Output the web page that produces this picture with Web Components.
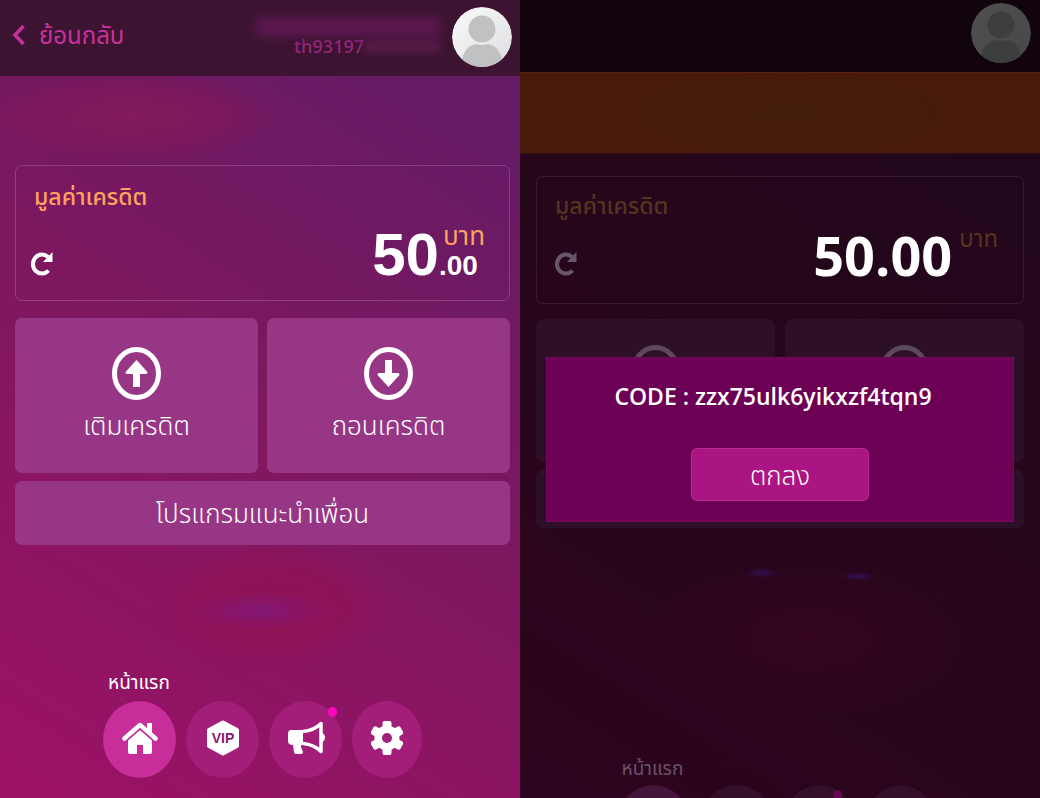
<!DOCTYPE html>
<html lang="th">
<head>
<meta charset="utf-8">
<meta name="viewport" content="width=device-width, initial-scale=1">
<title>เครดิต</title>
<style>
  body { margin: 0; font-family: "Open Sans", "Noto Sans Thai", "Noto Sans", sans-serif; background: #24061b; }
  main { display: grid; grid-template-columns: 1fr 1fr; height: 100vh; overflow: hidden; }
</style>
</head>
<body>
<main>
  <wallet-screen>
    <app-header slot="header">
      <a slot="back" href="#back">ย้อนกลับ</a>
      <span slot="user">th93197</span>
    </app-header>
    <credit-card>
      <span slot="title">มูลค่าเครดิต</span>
      <span slot="amount">50</span>
      <span slot="cents">.00</span>
      <span slot="unit">บาท</span>
    </credit-card>
    <action-tile direction="up">เติมเครดิต</action-tile>
    <action-tile direction="down">ถอนเครดิต</action-tile>
    <action-tile wide>โปรแกรมแนะนำเพื่อน</action-tile>
    <tab-bar slot="tabs">หน้าแรก</tab-bar>
  </wallet-screen>
  <wallet-screen dim>
    <app-header slot="header" dim></app-header>
    <credit-card dim>
      <span slot="title">มูลค่าเครดิต</span>
      <span slot="amount">50.00</span>
      <span slot="unit">บาท</span>
    </credit-card>
    <action-tile direction="up" dim></action-tile>
    <action-tile direction="down" dim></action-tile>
    <action-tile wide dim></action-tile>
    <tab-bar slot="tabs" dim>หน้าแรก</tab-bar>
    <code-dialog slot="dialog">CODE : zzx75ulk6yikxzf4tqn9<span slot="confirm">ตกลง</span></code-dialog>
  </wallet-screen>
</main>
<script>
const define = (name, markup, setup) => customElements.define(name, class extends HTMLElement {
  constructor() {
    super();
    const template = document.createElement('template');
    template.innerHTML = markup;
    this.attachShadow({ mode: 'open' }).append(template.content.cloneNode(true));
  }
  connectedCallback() { if (setup) setup(this, this.shadowRoot); }
});

define('wallet-screen', `
<style>
  :host {
    display: flex; flex-direction: column; position: relative; min-width: 0; min-height: 0; overflow: hidden;
    background:
      radial-gradient(75px 20px at 50% 76.5%, #801a80cc 0%, #801a8000 100%),
      radial-gradient(120px 64px at 52% 76%, #93104fcc 0%, #93104f88 60%, #93104f00 100%),
      radial-gradient(150px 46px at 25% 14.5%, #871c5dcc 0%, #821759aa 60%, #82175900 100%),
      linear-gradient(32deg, #9d1166 0%, #7c1860 52%, #651b65 88%);
  }
  :host([dim]) {
    background:
      radial-gradient(18px 5px at 46.5% 71.8%, #321052 0%, #32105200 100%),
      radial-gradient(18px 5px at 65% 72.2%, #321052 0%, #32105200 100%),
      radial-gradient(170px 80px at 56% 80%, #35061d 0%, #35061d00 100%),
      linear-gradient(32deg, #2d041d 0%, #26061b 52%, #1f061c 100%);
  }
  .banner { flex: none; height: 89px; }
  :host([dim]) .banner {
    box-sizing: border-box; height: 82px; margin-bottom: 22px;
    background: radial-gradient(170px 44px at 52% 50%, #451e0d, #471a0b);
    border-top: 1px solid #572012; border-bottom: 1px solid #35100f;
  }
  .content { display: grid; grid-template-columns: 1fr 1fr; gap: 8px 9px; padding: 0 10px 0 15px; }
  :host([dim]) .content { padding: 0 16px; column-gap: 10px; }
  .tabs { margin-top: auto; padding: 0 0 20px 5px; }
  :host([dim]) .tabs { margin-top: 226px; padding-left: 0; padding-right: 8px; }
</style>
<slot name="header"></slot>
<div class="banner"></div>
<section class="content"><slot></slot></section>
<div class="tabs"><slot name="tabs"></slot></div>
<slot name="dialog"></slot>
`);

define('app-header', `
<style>
  :host { display: flex; align-items: center; flex: none; height: 76px; box-sizing: border-box; padding: 0 8px 3px 12px; background: #3d1332; color: #c8329c; }
  :host([dim]) { height: 72px; padding: 0 9px 7px 12px; background: #12040d; }
  .back { display: flex; align-items: center; gap: 14px; padding-bottom: 4px; }
  :host([dim]) .back, :host([dim]) .user { visibility: hidden; }
  ::slotted(a) { color: inherit; text-decoration: none; font-size: 24px; line-height: 32px; }
  .user { margin-left: auto; margin-right: 12px; display: grid; justify-items: end; }
  .name { width: 184px; height: 18px; background: #5d1850; filter: blur(5px); }
  .id { display: flex; align-items: center; width: 146px; font-size: 18px; font-weight: 600; line-height: 20px; color: #912776; }
  .rest { flex: 1; height: 14px; background: #541a46; filter: blur(3px); }
  .avatar { flex: none; width: 60px; height: 60px; }
  :host([dim]) .avatar { filter: brightness(.32); }
</style>
<span class="back">
  <svg width="13" height="22" viewBox="0 0 13 22" aria-hidden="true"><path d="M11.500 2 3 11l8.500 9" fill="none" stroke="currentColor" stroke-width="3.500"/></svg>
  <slot name="back"></slot>
</span>
<span class="user"><span class="name"></span><span class="id"><slot name="user"></slot><span class="rest"></span></span></span>
<svg class="avatar" viewBox="0 0 60 60" role="img" aria-label="avatar">
  <defs>
    <linearGradient id="g" x1="0" y1="0" x2="1" y2="1"><stop offset="0" stop-color="#fafafb"/><stop offset="1" stop-color="#dcdddf"/></linearGradient>
    <clipPath id="c"><circle cx="30" cy="30" r="30"/></clipPath>
  </defs>
  <g clip-path="url(#c)"><circle cx="30" cy="30" r="30" fill="url(#g)"/><circle cx="30" cy="22" r="13.500" fill="#c0c1c3"/><path d="M10 60V52C12 43 18 37.500 25 37q5 2 10 0c7 .5 13 6 15 15v8z" fill="#c0c1c3"/></g>
</svg>
`);

define('credit-card', `
<style>
  :host { display: flex; flex-direction: column; grid-column: 1 / -1; box-sizing: border-box; height: 136px; margin-bottom: 9px; padding: 14px 24px 18px 14px; border: 1px solid #ffffff2b; border-radius: 7px; color: #fff; --gold: #ffa35c; --icon: #fff; }
  :host([dim]) { height: 128px; margin-bottom: 7px; padding: 12px 25px 18px 17px; border-color: #ffffff17; --gold: #57331f; --icon: #68566a; }
  .title { margin-left: 4px; font-size: 23px; line-height: 32px; font-weight: 500; color: var(--gold); }
  :host([dim]) .title { margin-left: 1px; }
  .row { display: flex; align-items: flex-end; justify-content: space-between; flex: 1; }
  button { padding: 0; border: 0; background: none; color: var(--icon); display: flex; margin-bottom: 6px; }
  :host([dim]) button { margin-bottom: 9px; }
  .value { display: flex; align-items: flex-end; }
  .amount { font: bold 60px/54px "Liberation Sans", sans-serif; }
  .side { display: grid; }
  .unit { margin-left: 4px; font-size: 26px; line-height: 30px; color: var(--gold); }
  .cents { font: bold 28px/32px "Liberation Sans", sans-serif; }
  :host([dim]) .unit { margin-left: 7px; font-size: 24px; line-height: 26px; }
  :host([dim]) .amount { font: 700 54px/60px "Open Sans", sans-serif; }
  :host([dim]) .value { align-items: flex-start; }
  :host([dim]) .cents { display: none; }
</style>
<div class="title"><slot name="title"></slot></div>
<div class="row">
  <button type="button" aria-label="refresh"><svg width="24" height="25" viewBox="0 0 24 25" aria-hidden="true"><path d="M18.500 19.500A9 9.500 0 1 1 18 6" fill="none" stroke="currentColor" stroke-width="4"/><path d="M22.500 1v10H13z" fill="currentColor"/></svg></button>
  <div class="value"><span class="amount"><slot name="amount"></slot></span><span class="side"><span class="unit"><slot name="unit"></slot></span><span class="cents"><slot name="cents"></slot></span></span></div>
</div>
`);

define('action-tile', `
<style>
  :host { display: block; height: 155px; }
  :host([dim]) { height: 143px; }
  :host([wide]) { grid-column: 1 / -1; height: 64px; }
  :host([wide][dim]) { height: 58px; }
  button { display: flex; flex-direction: column; align-items: center; box-sizing: border-box; width: 100%; height: 100%; padding: 29px 0 0; border: 0; border-radius: 7px; background: #983686; color: #fff; font: 300 26px/34px "Open Sans", "Noto Sans Thai", sans-serif; gap: 8px; }
  :host([dim]) button { padding-top: 26px; background: #2d1027; color: #5c4a5b; }
  :host([wide]) button { padding: 0; justify-content: center; }
  svg { display: none; flex: none; }
  :host([direction]) svg { display: block; }
  :host([direction="down"]) .arrow { transform: rotate(180deg); transform-origin: 24.500px 26.500px; }
</style>
<button type="button">
  <svg width="49" height="53" viewBox="0 0 49 53" aria-hidden="true"><ellipse cx="24.500" cy="26.500" rx="22" ry="24" fill="none" stroke="currentColor" stroke-width="5"/><path class="arrow" d="M24.500 13 35.500 25q0 2-1.500 2H28v13h-7V27h-6Q13.500 27 13.500 25z" fill="currentColor"/></svg>
  <span><slot></slot></span>
</button>
`, (host, root) => {
  if (!host.textContent) root.querySelector('button').setAttribute('aria-label', host.getAttribute('direction') || 'more');
});

define('tab-bar', `
<style>
  :host { display: block; width: 319px; margin: 0 auto; color: #fff; }
  .label { padding-left: 5px; font-size: 19px; line-height: 28px; margin-bottom: 5px; }
  :host([dim]) .label { color: #68526a; margin-bottom: 3px; }
  nav { display: grid; grid-template-columns: repeat(3, 73px) 70px; gap: 0 10px; justify-content: center; }
  button { position: relative; height: 77px; padding: 0 0 3px; border: 0; border-radius: 50%; background: #a31e78; color: #fff; display: grid; place-items: center; }
  button:first-child { background: #c82e99; }
  :host([dim]) button { background: #341029; color: #68526a; }
  :host([dim]) button:first-child { background: #44143a; }
  .dot { position: absolute; right: 5px; top: 6px; width: 9px; height: 10px; border-radius: 50%; background: #ff05bd; }
  :host([dim]) .dot { background: #6a0554; right: 14px; top: 5px; }
  text { font: bold 14px "Liberation Sans", sans-serif; fill: #8b1b6a; }
</style>
<div class="label"><slot></slot></div>
<nav>
  <button type="button" aria-label="home"><svg width="36" height="34" viewBox="0 0 36 34"><path d="M2.500 17.500 18 4l15.500 13.500" fill="none" stroke="currentColor" stroke-width="4.500" stroke-linecap="round" stroke-linejoin="round"/><path d="M25 2h5v12l-5-4zM6 19 18 9l12 10v12q0 2-2 2h-7V24h-6v9H8q-2 0-2-2z" fill="currentColor"/><path d="M5 19.500 18 8l13 11.500" fill="none" stroke="#c82e99" stroke-width="1.500"/></svg></button>
  <button type="button" class="vip"></button>
  <button type="button" aria-label="news"><svg width="38" height="36" viewBox="0 0 38 36"><path d="M4 10h12v15H14v2l2 5q0 2-2 2H9q-2 0-2-2l-1-7q-5 0-5-4v-7q0-4 3-4z" fill="currentColor"/><path d="M16 11.500q11-1 18-8v28q-7-7-18-8" fill="none" stroke="currentColor" stroke-width="3.500" stroke-linejoin="round"/><path d="M35 13q3 1 3 4.500T35 22z" fill="currentColor"/></svg><span class="dot"></span></button>
  <button type="button" aria-label="settings"><svg width="32" height="34" viewBox="0 0 32 34"><g fill="currentColor"><rect x="11.500" y="0" width="9" height="34" rx="2"/><rect x="11.500" y="0" width="9" height="34" rx="2" transform="rotate(60 16 17)"/><rect x="11.500" y="0" width="9" height="34" rx="2" transform="rotate(120 16 17)"/><circle cx="16" cy="17" r="12.500"/></g><circle cx="16" cy="17" r="5" fill="#a31e78"/></svg></button>
</nav>
`, (host, root) => {
  const vip = root.querySelector('.vip');
  vip.innerHTML = '<svg width="34" height="36" viewBox="0 0 34 36"><path d="M17 2.500 31 10v16L17 33.500 3 26V10z" fill="currentColor" stroke="currentColor" stroke-width="4" stroke-linejoin="round"/>' + (host.hasAttribute('dim') ? '' : '<text x="17" y="23" text-anchor="middle">VIP</text>') + '</svg>';
  if (host.hasAttribute('dim')) vip.setAttribute('aria-label', 'membership');
});

define('code-dialog', `
<style>
  :host { display: flex; flex-direction: column; align-items: center; position: absolute; left: 26px; right: 26px; top: 357px; box-sizing: border-box; height: 165px; padding: 21px 0 20px; background: #6b0055; color: #fff; border: 1px solid #77085f; }
  p { margin: 0 0 34px; padding-right: 14px; font: 600 23px/35px "Open Sans", sans-serif; white-space: nowrap; }
  button { width: 178px; height: 53px; padding: 0; border: 1px solid #b62a91; border-radius: 6px; background: #ab1583; color: #fff; font: 300 26px/34px "Open Sans", "Noto Sans Thai", sans-serif; }
</style>
<p><slot></slot></p>
<button type="button"><slot name="confirm"></slot></button>
`);
</script>
</body>
</html>
